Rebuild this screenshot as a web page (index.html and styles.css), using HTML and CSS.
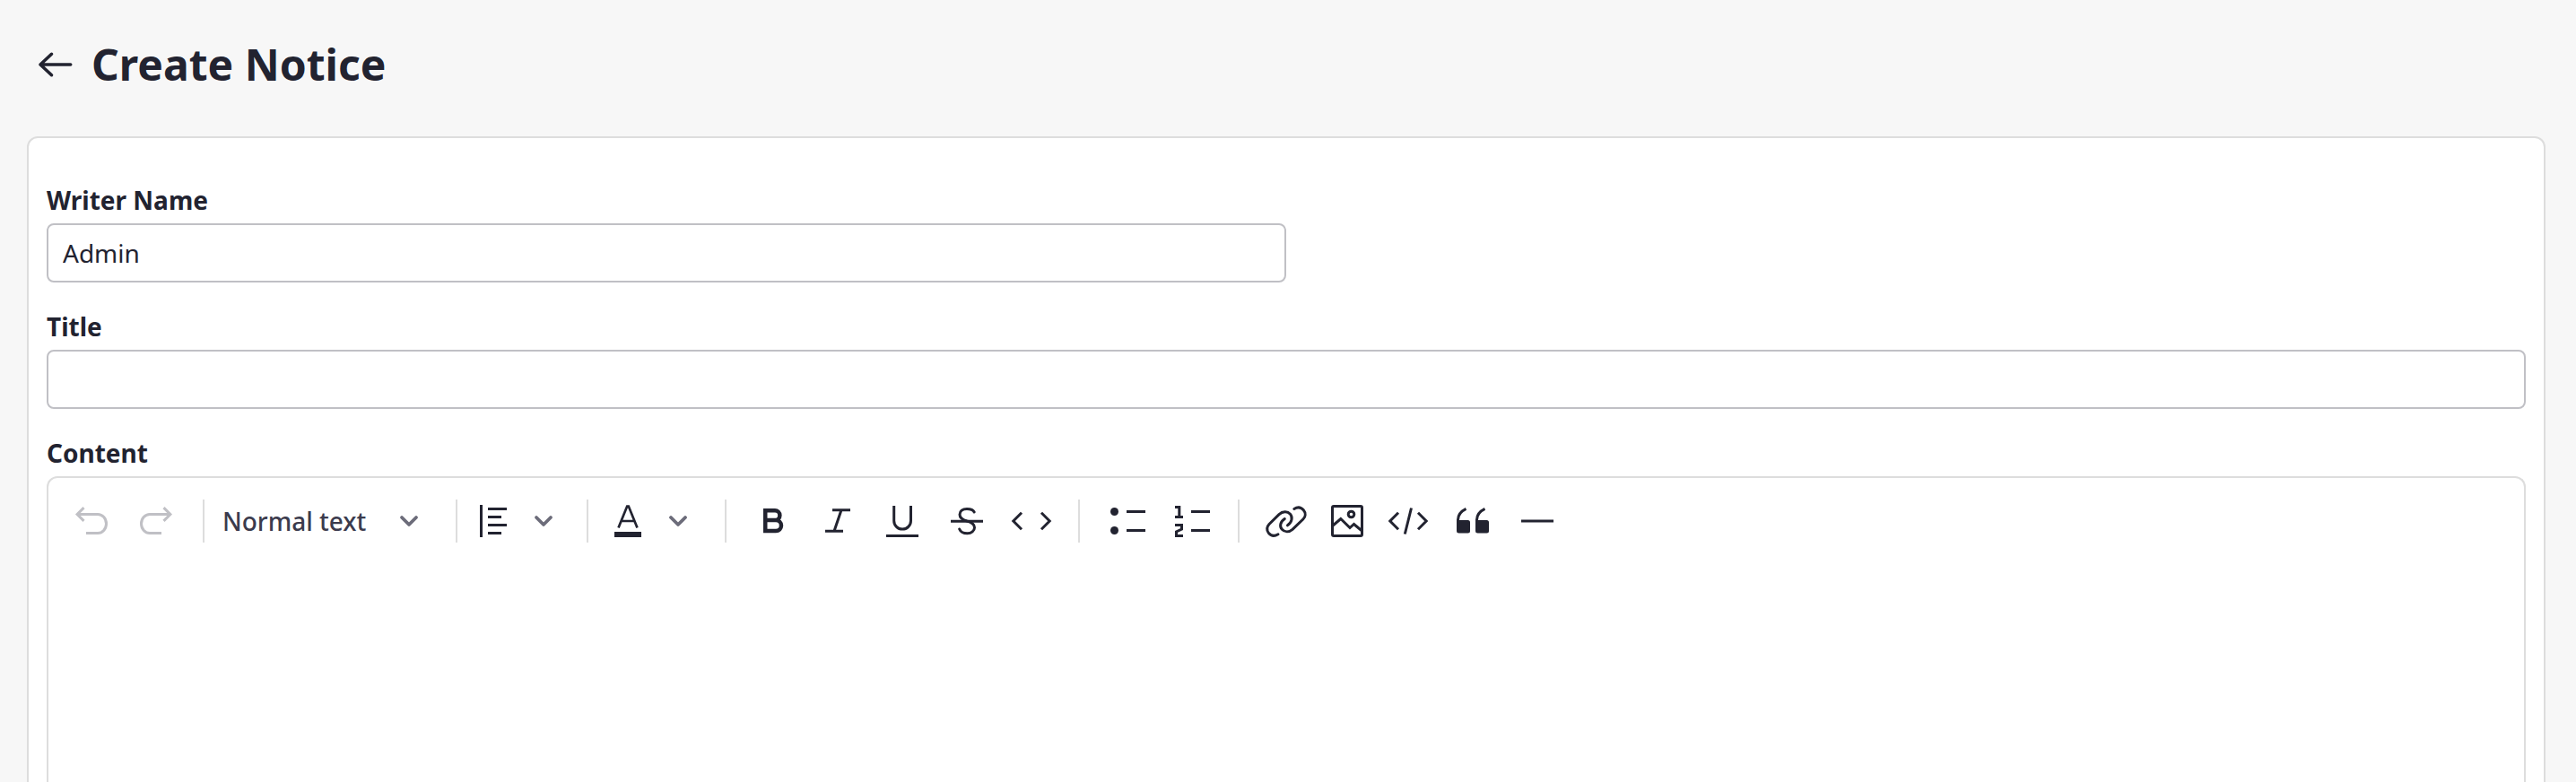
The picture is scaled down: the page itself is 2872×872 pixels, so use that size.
FILE: index.html
```html
<!DOCTYPE html>
<html lang="en">
<head>
<meta charset="utf-8">
<title>Create Notice</title>
<link rel="stylesheet" href="styles.css">
</head>
<body>
<header class="page-header">
  <svg class="icon back" viewBox="0 0 48 48"><path d="M40.700 24H7M19.500 12.300L7 24L19.500 35.700"/></svg>
  <h1 class="page-title">Create Notice</h1>
</header>
<main class="card">
  <section class="field half">
    <label class="label" for="writer">Writer Name</label>
    <input class="input" id="writer" type="text" value="Admin">
  </section>
  <section class="field">
    <label class="label" for="title">Title</label>
    <input class="input" id="title" type="text">
  </section>
  <section class="field content">
    <div class="label">Content</div>
    <div class="editor">
      <div class="toolbar">
        <div class="group history">
          <svg class="icon" viewBox="0 0 48 48"><path d="M8 16.500H31a9.500 10.500 0 0 1 0 21H18M15.500 9.100L8.100 16.500L15.500 23.900"/></svg>
          <svg class="icon" viewBox="0 0 48 48"><path d="M40 16.500H17a9.500 10.500 0 0 0 0 21H30M32.500 9.100L39.900 16.500L32.500 23.900"/></svg>
        </div>
        <span class="divider"></span>
        <div class="group style-select">
          <span class="style-name">Normal text</span>
          <svg class="chevron" viewBox="0 0 24 24"><path d="M4 8L12 16L20 8"/></svg>
        </div>
        <span class="divider"></span>
        <div class="group align">
          <svg class="icon" viewBox="0 0 48 48"><path d="M10.500 6V42M18 10.500H39M18 19.500H33M18 28.500H39M18 37.500H33"/></svg>
          <svg class="chevron" viewBox="0 0 24 24"><path d="M4 8L12 16L20 8"/></svg>
        </div>
        <span class="divider"></span>
        <div class="group color">
          <svg class="icon" viewBox="0 0 48 48"><path class="thin" d="M13.500 31.500L23.200 7.500H24.800L34.500 31.500M16.500 24H31.500"/><path class="fill" d="M9 36H39V42H9z"/></svg>
          <svg class="chevron" viewBox="0 0 24 24"><path d="M4 8L12 16L20 8"/></svg>
        </div>
        <span class="divider"></span>
        <div class="group marks">
          <svg class="icon" viewBox="0 0 48 48"><path class="bold" d="M15.250 12.250H26a5.300 5.300 0 0 1 0 10.800H15.250zM15.250 23.050H27a6 6 0 0 1 0 12H15.250z"/></svg>
          <svg class="icon" viewBox="0 0 48 48"><path d="M18 11.700H38M10 35.300H30M28 11.700L20 35.300"/></svg>
          <svg class="icon" viewBox="0 0 48 48"><path d="M14.700 7V23.700a9.400 9.400 0 0 0 18.800 0V7M6 40.500H42"/></svg>
          <svg class="icon" viewBox="0 0 48 48"><path class="round" d="M32.200 14C31 11.500 27.800 10.500 24 10.500C19 10.500 16 13 16 16.700C16 20.500 19 22.500 24 24C29.500 25.500 32.500 27.500 32.500 31.300C32.500 35 29 37.800 24.500 37.800C20 37.800 17 36.200 15.700 33"/><path d="M6 24.200H42"/></svg>
          <svg class="icon" viewBox="0 0 48 48"><path d="M13 14.700L3.800 24L13 33.300M35 14.700L44.200 24L35 33.300"/></svg>
        </div>
        <span class="divider"></span>
        <div class="group lists">
          <svg class="icon" viewBox="0 0 48 48"><circle class="fill" cx="10.500" cy="13.500" r="4.500"/><circle class="fill" cx="10.500" cy="34.500" r="4.500"/><path d="M24 13.500H45M24 34.500H45"/></svg>
          <svg class="icon" viewBox="0 0 48 48"><path d="M6 8.500H10.800V20M6 19.500H15M6 28.500H13.500V33L7.500 36V40.500H15M24 13.500H45M24 34.500H45"/></svg>
        </div>
        <span class="divider"></span>
        <div class="group inserts">
          <svg class="icon" viewBox="0 0 48 48"><path class="round" d="M15 38.800C11 41.200 7 40.500 4.500 37.500C1.800 34 2.500 30.200 5 27.500L16 16.700C20 13 25.500 13 28.500 16.200C31.500 19.500 30.500 25.500 25.500 28.800M22.300 21.500C17.300 24.800 16.300 30 19.300 33.300C22.300 36.500 27 36.800 31 33.300L42.800 22C45.700 19.200 46 15 43.300 11.800C40.700 8.800 36.700 8 32.800 10.500"/></svg>
          <svg class="icon" viewBox="0 0 48 48"><rect x="7.500" y="7.500" width="33" height="33" rx="1.500"/><circle cx="28.500" cy="16.500" r="3.300"/><path d="M7.500 29.500L16.800 21.500L27 31.500L31.500 27.500L40.500 35"/></svg>
          <svg class="icon" viewBox="0 0 48 48"><path d="M13 14.700L3.800 24L13 33.300M35 14.700L44.200 24L35 33.300M27.500 9.500L20.300 38.500"/></svg>
          <svg class="icon gap" viewBox="0 0 48 48"><rect class="fill" x="6" y="23" width="15" height="14.500" rx="2.500"/><rect class="fill" x="27" y="23" width="15" height="14.500" rx="2.500"/><path d="M7.500 26V22.500C7.500 17.500 11 13 16.500 10.300M28.500 26V22.500C28.500 17.500 32 13 37.500 10.300"/></svg>
          <svg class="icon gap" viewBox="0 0 48 48"><path d="M6 24H42"/></svg>
        </div>
      </div>
    </div>
  </section>
</main>
</body>
</html>
```
FILE: styles.css
```css
* {
  box-sizing: border-box;
}

body {
  margin: 0;
  height: 872px;
  overflow: hidden;
  display: flex;
  flex-direction: column;
  background: #f7f7f7;
  color: #222330;
  font-family: "Noto Sans", sans-serif;
  font-size: 28px;
}

.page-header {
  flex: none;
  display: flex;
  align-items: center;
  gap: 16px;
  height: 152px;
  padding: 0 38px 8px;
}

.page-title {
  margin: 0;
  font-size: 48px;
  line-height: 64px;
  font-weight: 700;
}

.card {
  flex: none;
  display: flex;
  flex-direction: column;
  gap: 30px;
  width: 2808px;
  height: 760px;
  margin-left: 30px;
  padding: 50px 20px 0;
  background: #fff;
  border: 2px solid #ddd;
  border-radius: 12px;
}

.field {
  display: flex;
  flex-direction: column;
}

.half {
  width: 50%;
}

.label {
  height: 45px;
  line-height: 38px;
  font-weight: 700;
}

.input {
  height: 66px;
  width: 100%;
  padding: 0 16px;
  border: 2px solid #c0c0c5;
  border-radius: 8px;
  background: #fff;
  color: inherit;
  font: inherit;
  outline: none;
}

.content {
  flex: 1;
}

.editor {
  flex: 1;
  border: 2px solid #ddd;
  border-bottom: 0;
  border-radius: 12px 12px 0 0;
}

.toolbar {
  display: flex;
  height: 96px;
  padding: 24px;
}

.divider {
  width: 2px;
  height: 48px;
  background: #ddd;
}

.group {
  display: flex;
  align-items: center;
}

.history {
  gap: 24px;
  padding-right: 28px;
  color: #c0c0c5;
}

.style-select {
  width: 280px;
  justify-content: space-between;
  padding: 0 40px 0 20px;
}

.style-name {
  color: #3b3b4d;
  font-weight: 500;
  line-height: 48px;
  white-space: nowrap;
}

.align {
  gap: 20px;
  padding: 0 36px 0 16px;
}

.color {
  gap: 20px;
  padding: 0 40px 0 20px;
}

.marks,
.lists {
  gap: 24px;
  padding: 0 28px;
}

.inserts {
  gap: 20px;
  padding-left: 28px;
}

.inserts .gap {
  margin-left: 4px;
}

.icon,
.chevron {
  flex: none;
  display: block;
  fill: none;
  stroke: currentColor;
  stroke-width: 3;
  overflow: visible;
}

.icon {
  width: 48px;
  height: 48px;
}

.back {
  stroke-width: 3.6;
  stroke-linecap: round;
  stroke-linejoin: round;
}

.chevron {
  width: 24px;
  height: 24px;
  color: #6c6c7a;
  stroke-width: 3.8;
  stroke-linecap: round;
  stroke-linejoin: round;
}

.thin {
  stroke-width: 2.7;
}

.bold {
  stroke-width: 4.5;
}

.round {
  stroke-linecap: round;
}

.fill {
  fill: currentColor;
  stroke: none;
}
```
